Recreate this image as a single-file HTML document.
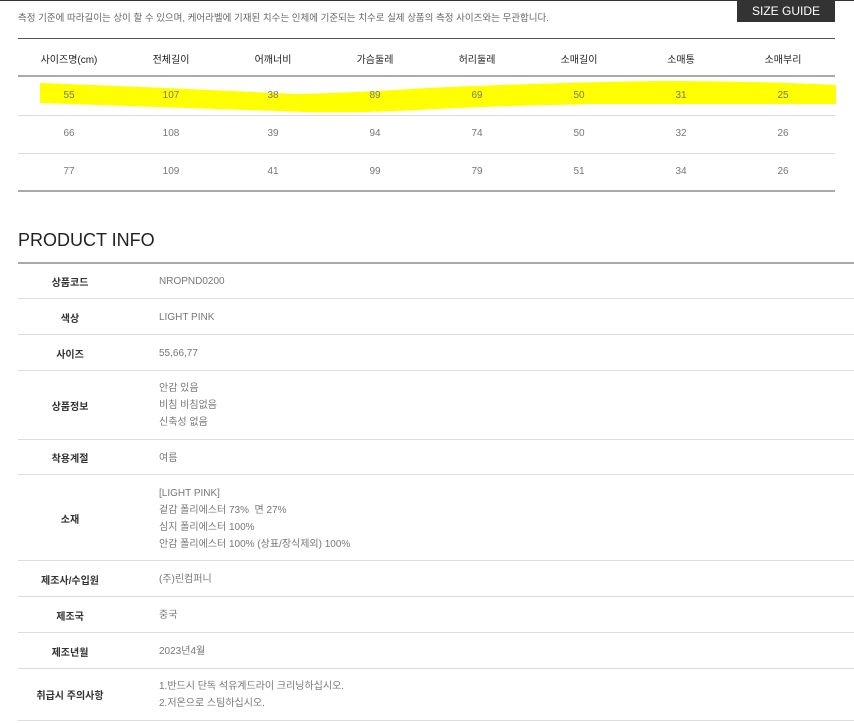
<!DOCTYPE html>
<html><head><meta charset="utf-8"><style>
*{margin:0;padding:0;box-sizing:border-box}
body{width:854px;height:723px;background:#fff;position:relative;overflow:hidden;font-family:"Liberation Sans","Noto Sans CJK KR",sans-serif;color:#555}
.a{position:absolute}
.note{left:18px;top:10px;font-size:9.5px;color:#666}
.sg{left:737px;top:-6px;width:98px;height:28px;background:#333;color:#fff;font-size:12px;text-align:center;line-height:28px;padding-top:3px;letter-spacing:0}
.line{position:absolute;left:18px;width:817px}
.cell{position:absolute;width:102px;text-align:center;font-size:10px;color:#777}
.hd{color:#222;font-size:10px}
.ttl{left:18px;top:230px;font-size:18px;color:#222}
.lab{position:absolute;left:18px;width:104px;text-align:center;font-size:10px;font-weight:bold;color:#333}
.val{position:absolute;left:159px;font-size:10px;color:#777;line-height:17px}
.rl{position:absolute;left:18px;width:836px;height:1px;background:#ddd}
</style></head><body>
<div class="a" style="left:0;top:0;width:854px;height:1px;background:#333"></div>
<div class="a note">측정 기준에 따라길이는 상이 할 수 있으며, 케어라벨에 기재된 치수는 인체에 기준되는 치수로 실제 상품의 측정 사이즈와는 무관합니다.</div>
<div class="a sg">SIZE GUIDE</div>
<div class="line" style="top:38px;height:1px;background:#555"></div>
<div class="line" style="top:75px;height:2px;background:#aaa"></div>
<svg class="a" style="left:38px;top:78px" width="800" height="38"><path d="M2 5 Q110 9 260 16 Q330 14 390 10 Q500 5 620 3 Q720 3 798 7 L798 26 Q650 26 560 26 Q450 28 380 32 Q300 36 240 33 Q120 29 2 25 Z" fill="#ffff00"/></svg>
<div class="line" style="top:115px;height:1px;background:#ddd"></div>
<div class="line" style="top:153px;height:1px;background:#ddd"></div>
<div class="line" style="top:190px;height:2px;background:#aaa"></div>
<div id="tbl"></div>
<div class="a ttl">PRODUCT INFO</div>
<div class="a" style="left:18px;top:262px;width:836px;height:2px;background:#aaa"></div>
<div class="rl" style="top:298px"></div><div class="rl" style="top:334px"></div><div class="rl" style="top:370px"></div><div class="rl" style="top:439px"></div><div class="rl" style="top:474px"></div><div class="rl" style="top:560px"></div><div class="rl" style="top:596px"></div><div class="rl" style="top:632px"></div><div class="rl" style="top:668px"></div><div class="rl" style="top:720px"></div>
<div class="lab" style="top:274px">상품코드</div><div class="val" style="top:273px">NROPND0200</div>
<div class="lab" style="top:310px">색상</div><div class="val" style="top:309px">LIGHT PINK</div>
<div class="lab" style="top:346px">사이즈</div><div class="val" style="top:345px">55,66,77</div>
<div class="lab" style="top:398px">상품정보</div><div class="val" style="top:380px">안감 있음<br>비침 비침없음<br>신축성 없음</div>
<div class="lab" style="top:450px">착용계절</div><div class="val" style="top:450px">여름</div>
<div class="lab" style="top:511px">소재</div><div class="val" style="top:485px">[LIGHT PINK]<br>겉감 폴리에스터 73%&nbsp; 면 27%<br>심지 폴리에스터 100%<br>안감 폴리에스터 100% (상표/장식제외) 100%</div>
<div class="lab" style="top:572px">제조사/수입원</div><div class="val" style="top:571px">(주)린컴퍼니</div>
<div class="lab" style="top:608px">제조국</div><div class="val" style="top:607px">중국</div>
<div class="lab" style="top:644px">제조년월</div><div class="val" style="top:643px">2023년4월</div>
<div class="lab" style="top:687px">취급시 주의사항</div><div class="val" style="top:678px">1.반드시 단독 석유계드라이 크리닝하십시오.<br>2.저온으로 스팀하십시오.</div>
<script>
var h=["사이즈명(cm)","전체길이","어깨너비","가슴둘레","허리둘레","소매길이","소매통","소매부리"];
var r=[["55","107","38","89","69","50","31","25"],["66","108","39","94","74","50","32","26"],["77","109","41","99","79","51","34","26"]];
var s="";
for(var i=0;i<8;i++){var x=18+i*102;
s+='<div class="cell hd" style="left:'+x+'px;top:51px">'+h[i]+'</div>';
for(var j=0;j<3;j++)s+='<div class="cell" style="left:'+x+'px;top:'+(90+j*38)+'px">'+r[j][i]+'</div>';}
document.getElementById("tbl").innerHTML=s;
</script>
</body></html>
